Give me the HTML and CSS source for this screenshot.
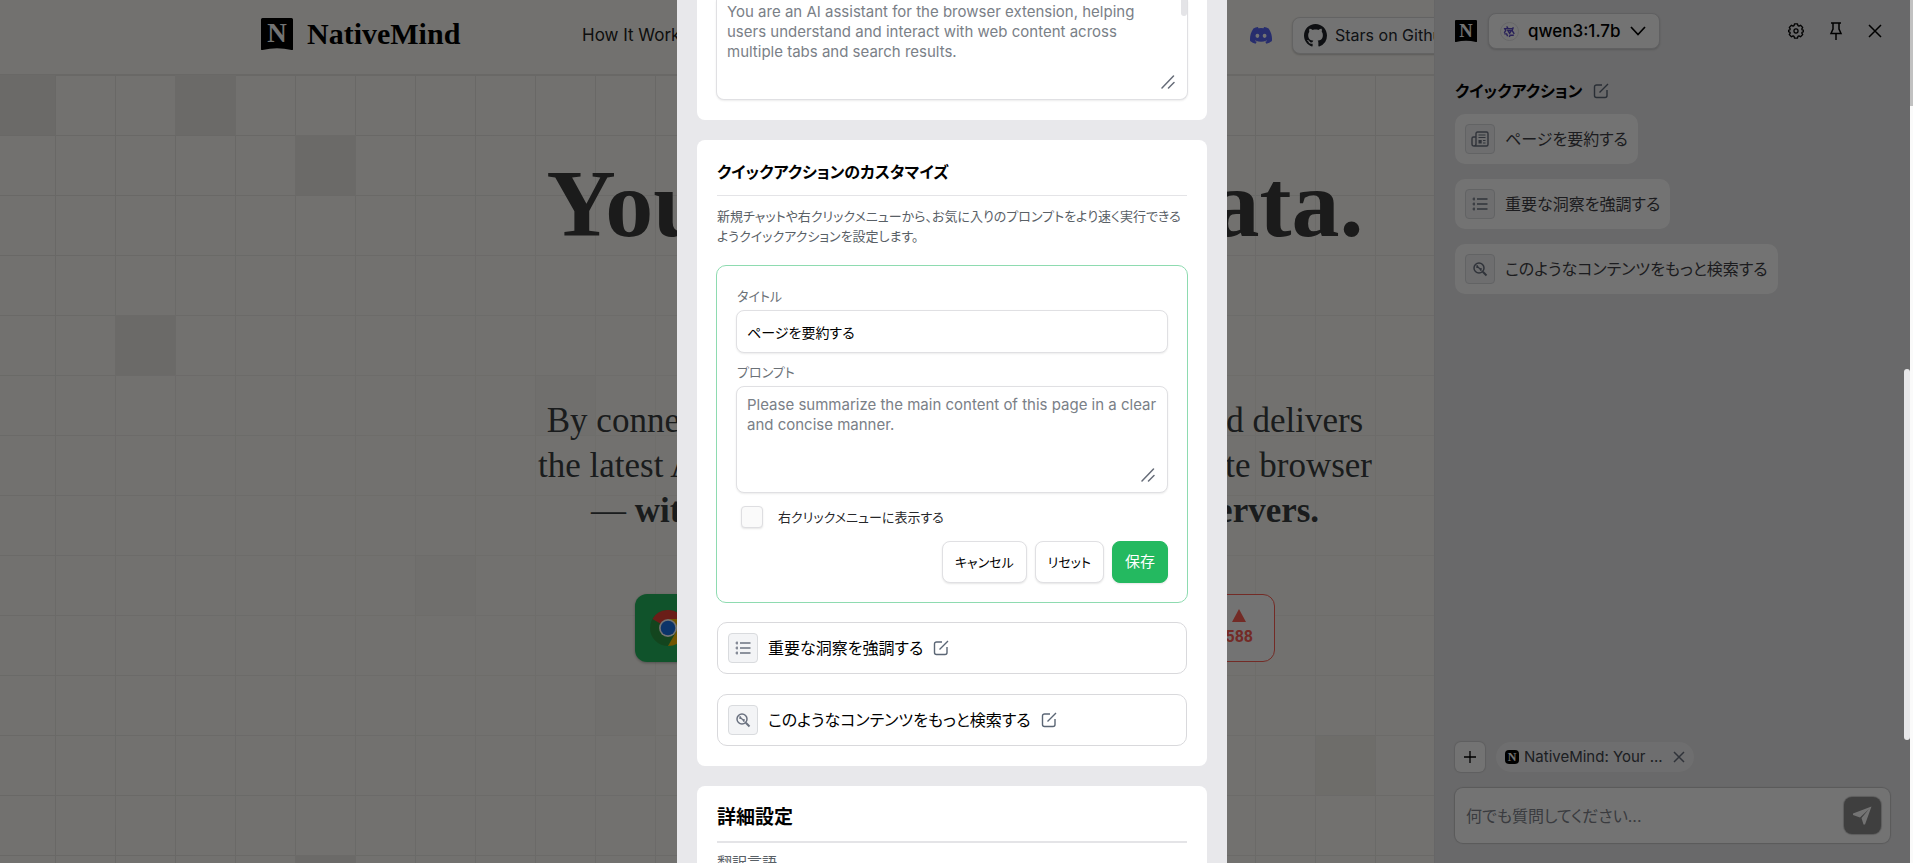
FILE: index.html
```
<!DOCTYPE html>
<html lang="ja">
<head>
  <meta charset="UTF-8">
  <meta name="viewport" content="width=device-width, initial-scale=1">
  <title>NativeMind</title>
  <link rel="stylesheet" href="styles.css">
</head>
<body>
  <!-- shared icons -->
  <svg class="sprite" aria-hidden="true">
    <symbol id="logo" viewBox="0 0 32 32">
      <path d="M1.500 0h29q1.500 0 1.500 1.500V31q0 1.500-1.500 1Q16 28.500 1.500 32 0 32.500 0 31V1.500Q0 0 1.500 0z"/>
      <text x="16" y="24" text-anchor="middle" font-family="Liberation Serif, serif" font-weight="bold" font-size="27" fill="#fff">N</text>
    </symbol>
    <symbol id="edit" viewBox="0 0 16 16">
      <path d="M9 2H3.500A2 2 0 0 0 1.500 4v8.500a2 2 0 0 0 2 2H12a2 2 0 0 0 2-2V7M6.500 9.500 15 1" fill="none" stroke="currentColor" stroke-width="1.400"/>
    </symbol>
    <symbol id="list" viewBox="0 0 16 16">
      <path d="M5 3h10.500M5 8h10.500M5 13h10.500" fill="none" stroke="currentColor" stroke-width="1.500"/>
      <path d="M.5 3h2.500M.5 8h2.500M.5 13h2.500M2 1.500v3M2 6.500v3M2 11.500v3" fill="none" stroke="currentColor" stroke-width="1.200"/>
    </symbol>
    <symbol id="search" viewBox="0 0 16 16">
      <circle cx="7" cy="7" r="5" fill="none" stroke="currentColor" stroke-width="1.500"/>
      <path d="M10.800 10.800 14.500 14.500" stroke="currentColor" stroke-width="2"/>
      <path d="M5.200 5.200l3.600 3.600M5 7V5h1M9 7v2H8" fill="none" stroke="currentColor" stroke-width="1.300"/>
    </symbol>
    <symbol id="news" viewBox="0 0 18 16">
      <path d="M5 13V2.500Q5 1 6.500 1h9Q17 1 17 2.500v11q0 1.500-1.500 1.500H3Q1 15 1 13V7.500Q1 6 2.500 6H5M5 13q0 2-2 2" fill="none" stroke="currentColor" stroke-width="1.400"/>
      <path d="M7.500 4h7M7.500 6.500h7M12 9.500h2.500M12 12h2.500" stroke="currentColor" stroke-width="1.100"/>
      <path d="M7.500 9h3.200v3.500H7.500z" fill="currentColor"/>
    </symbol>
    <symbol id="resize" viewBox="0 0 14 14">
      <path d="M1 13 12.500 1M7.500 13l5.500-5.500" stroke="currentColor" stroke-width="1.500" stroke-linecap="round"/>
    </symbol>
  </svg>

  <div class="app">
    <header class="site-header">
      <div class="header-inner">
        <a class="brand" href="#">
          <svg class="brand-logo" aria-hidden="true"><use href="#logo"/></svg>
          NativeMind
        </a>
        <nav class="site-nav">
          <a href="#">How It Works</a>
          <a href="#">Features</a>
          <a href="#">FAQ</a>
          <a href="#">Blog</a>
        </nav>
        <div class="header-actions">
          <a class="discord" href="#" aria-label="Discord">
            <svg width="22" height="17" viewBox="0 0 22 17" aria-hidden="true">
              <path d="M18.600 1.400A18 18 0 0 0 14.100 0l-.6 1.200a17 17 0 0 0-5 0L7.900 0a18 18 0 0 0-4.500 1.400C.5 5.600-.3 9.800.1 13.900A18 18 0 0 0 5.600 16.700l1.200-1.900-1.900-.9.500-.4a13 13 0 0 0 11.200 0l.5.4-1.900.9 1.200 1.900a18 18 0 0 0 5.500-2.800c.5-4.700-.8-8.900-3.300-12.500z" fill="#5865f2"/>
              <ellipse cx="7.400" cy="8.800" rx="1.900" ry="2.100" fill="#fff"/>
              <ellipse cx="14.600" cy="8.800" rx="1.900" ry="2.100" fill="#fff"/>
            </svg>
          </a>
          <a class="github" href="#">
            <svg width="23" height="23" viewBox="0 0 16 16" aria-hidden="true">
              <path fill="#1f2328" d="M8 0C3.580 0 0 3.580 0 8c0 3.540 2.290 6.530 5.470 7.590.4.070.55-.17.55-.38 0-.19-.01-.82-.01-1.490-2.010.37-2.530-.49-2.690-.94-.09-.23-.48-.94-.82-1.130-.28-.15-.68-.52-.01-.53.63-.01 1.080.58 1.230.82.72 1.210 1.870.87 2.330.66.070-.52.28-.87.51-1.070-1.780-.2-3.640-.89-3.640-3.950 0-.87.31-1.590.82-2.150-.08-.2-.36-1.020.08-2.120 0 0 .67-.21 2.200.82.64-.18 1.320-.27 2-.27s1.360.09 2 .27c1.530-1.040 2.200-.82 2.200-.82.44 1.100.16 1.920.08 2.120.51.56.82 1.270.82 2.150 0 3.070-1.870 3.750-3.650 3.950.29.25.54.73.54 1.480 0 1.070-.01 1.930-.01 2.200 0 .21.15.46.55.38A8.010 8.010 0 0 0 16 8c0-4.420-3.580-8-8-8z"/>
            </svg>
            Stars on Github
          </a>
        </div>
      </div>
    </header>

    <main class="hero">
      <svg class="hero-grid" aria-hidden="true">
        <defs>
          <pattern id="cells" width="60" height="60" x="-5" y="0" patternUnits="userSpaceOnUse">
            <path d="M.5 0v60M0 .5h60" stroke="#e9e7e3" fill="none"/>
          </pattern>
          <radialGradient id="fade" cx="45%" cy="58%" r="55%">
            <stop offset="0" stop-color="#fff" stop-opacity=".3"/>
            <stop offset=".5" stop-color="#fff" stop-opacity=".5"/>
            <stop offset="1" stop-color="#fff"/>
          </radialGradient>
          <mask id="fadeMask"><rect width="100%" height="100%" fill="url(#fade)"/></mask>
        </defs>
        <rect width="100%" height="100%" fill="url(#cells)" mask="url(#fadeMask)"/>
        <g fill="#edebe6">
          <path d="M0 0h55v60H0zM175 0h61v60h-61zM295 60h61v60h-61zM115 240h61v60h-61zM295 780h61v60h-61z"/>
          <path d="M1315 660h60v60h-60z" opacity=".6"/>
          <path d="M535 300h60v60h-60zM415 480h60v60h-60zM595 600h60v60h-60z" opacity=".2"/>
        </g>
      </svg>
      <h1>Your AI. Your Data.<br>Zero Cloud.</h1>
      <p class="lead">
        By connecting to Ollama local LLM, NativeMind delivers<br>
        the latest AI capabilities right inside your favourite browser<br>
        — <b>without sending a single byte to cloud servers.</b>
      </p>
      <div class="cta">
        <a class="cta-chrome" href="#">
          <svg width="36" height="36" viewBox="0 0 36 36" aria-hidden="true">
            <circle cx="18" cy="18" r="18" fill="#2a9a44"/>
            <path d="M18 18 2.400 9A18 18 0 0 1 33.600 9z" fill="#ea4335"/>
            <path d="M18 9h15.600A18 18 0 0 1 18 36l8-14z" fill="#fbbc04"/>
            <circle cx="18" cy="18" r="9" fill="#fff"/>
            <circle cx="18" cy="18" r="7.300" fill="#1a73e8"/>
          </svg>
          Add to Chrome for Free
        </a>
        <a class="cta-hunt" href="#">
          <span>Featured on Product Hunt</span>
          <span class="votes">
            <svg width="14" height="13" viewBox="0 0 14 13" aria-hidden="true"><path d="M7 0l7 13H0z" fill="currentColor"/></svg>
            588
          </span>
        </a>
      </div>
    </main>

    <aside class="sidebar">
      <div class="side-top">
        <svg class="side-logo" aria-hidden="true"><use href="#logo"/></svg>
        <div class="model">
          <svg width="19" height="19" viewBox="0 0 20 20" aria-hidden="true">
            <circle cx="10" cy="10" r="9.500" fill="#fff" stroke="#e4e4e7"/>
            <path d="M7 4.500l1.500 2.500h5M14 5.500 12.800 9l2.200 3.500M14.500 14h-3.500l-1.500 1.500M8 15 7 12.500H4.500M4.500 11.500 6 9 5 7h3M8.300 9h3.600l-1.800 3z" fill="none" stroke="#5b4bc4" stroke-width="1.500"/>
          </svg>
          <select aria-label="モデル"><option>qwen3:1.7b</option></select>
          <svg width="16" height="10" viewBox="0 0 16 10" aria-hidden="true"><path d="M1 1l7 7.500L15 1" fill="none" stroke="#000" stroke-width="1.700"/></svg>
        </div>
        <div class="side-tools">
          <button aria-label="設定">
            <svg width="16" height="16" viewBox="0 0 18 18" aria-hidden="true">
              <path d="M7.300 1h3.400l.5 2 1.100.5 1.800-1 2.400 2.400-1 1.800.5 1.100 2 .5v1.400l-2 .5-.5 1.100 1 1.800-2.400 2.400-1.800-1-1.100.5-.5 2H7.300l-.5-2-1.100-.5-1.800 1-2.400-2.400 1-1.800-.5-1.100-1.500-.5V8.300L2 7.800l.5-1.100-1-1.800 2.400-2.400 1.800 1L6.800 3z" fill="none" stroke="#000" stroke-width="1.500" stroke-linejoin="round"/>
              <circle cx="9" cy="9" r="2.300" fill="none" stroke="#000" stroke-width="1.400"/>
            </svg>
          </button>
          <button aria-label="固定">
            <svg width="14" height="18" viewBox="0 0 14 18" aria-hidden="true">
              <path d="M2 1h10M4 1v6l-2 4.500h10L10 7V1M7 11.500V18" fill="none" stroke="#000" stroke-width="1.500"/>
            </svg>
          </button>
          <button aria-label="閉じる">
            <svg width="14" height="14" viewBox="0 0 14 14" aria-hidden="true"><path d="M1 1l12 12M13 1 1 13" stroke="#000" stroke-width="1.500"/></svg>
          </button>
        </div>
      </div>
      <h2 class="side-title">クイックアクション <svg class="icon-edit" aria-hidden="true"><use href="#edit"/></svg></h2>
      <div class="quick-list">
        <button class="quick"><span class="tile"><svg class="icon-news" aria-hidden="true"><use href="#news"/></svg></span>ページを要約する</button>
        <button class="quick"><span class="tile"><svg class="icon-tile" aria-hidden="true"><use href="#list"/></svg></span>重要な洞察を強調する</button>
        <button class="quick"><span class="tile"><svg class="icon-tile" aria-hidden="true"><use href="#search"/></svg></span>このようなコンテンツをもっと検索する</button>
      </div>
      <div class="side-bottom">
        <div class="tabs">
          <button class="add-tab" aria-label="タブを追加">
            <svg width="12" height="12" viewBox="0 0 12 12" aria-hidden="true"><path d="M6 0v12M0 6h12" stroke="#000" stroke-width="1.300"/></svg>
          </button>
          <div class="chip">
            <svg width="14" height="14" viewBox="0 0 14 14" aria-hidden="true">
              <rect width="14" height="14" rx="4"/>
              <text x="7" y="11" text-anchor="middle" font-family="Liberation Serif, serif" font-weight="bold" font-size="12" fill="#fff">N</text>
            </svg>
            NativeMind: Your ...
            <button aria-label="タブを外す">
              <svg width="12" height="12" viewBox="0 0 12 12" aria-hidden="true"><path d="M1 1l10 10M11 1 1 11" stroke="#6b7280" stroke-width="1.500"/></svg>
            </button>
          </div>
        </div>
        <div class="ask">
          <input type="text" aria-label="質問" placeholder="何でも質問してください...">
          <button class="send" aria-label="送信">
            <svg width="19" height="19" viewBox="0 0 19 19" aria-hidden="true"><path d="M18.500.5 0 7.500v1.500l7 2.500L16 3 8.500 12l2 6.500h1.500z" fill="#fff"/></svg>
          </button>
        </div>
      </div>
    </aside>

    <div class="overlay">
      <div class="modal" role="dialog" aria-label="設定">
        <section class="card card-first">
          <div class="area area-system">
            <textarea aria-label="システムプロンプト">You are an AI assistant for the browser extension, helping users understand and interact with web content across multiple tabs and search results.</textarea>
            <span class="area-thumb"></span>
            <svg class="grip" aria-hidden="true"><use href="#resize"/></svg>
          </div>
        </section>

        <section class="card">
          <h2>クイックアクションのカスタマイズ</h2>
          <p class="desc">新規チャットや右クリックメニューから、お気に入りのプロンプトをより速く実行できるようクイックアクションを設定します。</p>

          <form class="editor">
            <label for="title">タイトル</label>
            <input class="text-input" type="text" id="title" value="ページを要約する">
            <label for="prompt">プロンプト</label>
            <div class="area">
              <textarea id="prompt">Please summarize the main content of this page in a clear and concise manner.</textarea>
              <svg class="grip" aria-hidden="true"><use href="#resize"/></svg>
            </div>
            <div class="check">
              <input type="checkbox" id="menu">
              <label for="menu">右クリックメニューに表示する</label>
            </div>
            <div class="buttons">
              <button type="button">キャンセル</button>
              <button type="button">リセット</button>
              <button type="button" class="save">保存</button>
            </div>
          </form>

          <div class="rows">
            <div class="row">
              <span class="tile"><svg class="icon-tile" aria-hidden="true"><use href="#list"/></svg></span>
              重要な洞察を強調する
              <button aria-label="編集"><svg class="icon-edit" aria-hidden="true"><use href="#edit"/></svg></button>
            </div>
            <div class="row">
              <span class="tile"><svg class="icon-tile" aria-hidden="true"><use href="#search"/></svg></span>
              このようなコンテンツをもっと検索する
              <button aria-label="編集"><svg class="icon-edit" aria-hidden="true"><use href="#edit"/></svg></button>
            </div>
          </div>
        </section>

        <section class="card card-last">
          <h2>詳細設定</h2>
          <p class="field-name">翻訳言語</p>
        </section>
      </div>
      <div class="overlay-track"><div class="overlay-thumb"></div></div>
    </div>
  </div>
  <div class="page-track"><div class="page-thumb"></div></div>
</body>
</html>
```
FILE: styles.css
```
* {
  box-sizing: border-box;
}

body {
  margin: 0;
  display: flex;
  height: 100vh;
  overflow: hidden;
  font-family: Inter, "Noto Sans CJK JP", sans-serif;
  font-size: 15px;
  line-height: 20px;
  color: #000;
}

h1, h2, p {
  margin: 0;
}

a {
  color: inherit;
  text-decoration: none;
}

button, input, textarea, select {
  font: inherit;
  color: inherit;
  margin: 0;
}

button {
  padding: 0;
  border: 0;
  background: none;
  cursor: pointer;
}

svg {
  flex: none;
  display: block;
}

.sprite {
  position: absolute;
  width: 0;
  height: 0;
}

.app {
  position: relative;
  flex: 1;
  min-width: 0;
  overflow: hidden;
  background: #fdfbf5;
}

/* site */
.site-header {
  border-bottom: 1px solid #e9e7e3;
}

.header-inner {
  display: flex;
  align-items: center;
  max-width: 1388px;
  height: 74px;
  margin: 0 auto;
  padding-bottom: 4px;
}

.brand {
  display: flex;
  align-items: center;
  gap: 14px;
  width: 321px;
  padding-bottom: 3px;
  font-family: "Liberation Serif", serif;
  font-size: 30px;
  font-weight: bold;
}

.brand-logo {
  width: 32px;
  height: 32px;
}

.site-nav {
  display: flex;
  flex: 1;
  gap: 40px;
  font-size: 17px;
  color: #222;
}

.header-actions {
  display: flex;
  align-items: center;
  gap: 20px;
  width: 399px;
}

.github {
  display: flex;
  align-items: center;
  gap: 8px;
  height: 37px;
  padding: 0 11px;
  border: 1px solid #dcdcdc;
  border-radius: 8px;
  background: #fff;
  box-shadow: 0 1px 2px rgba(0, 0, 0, 0.2);
  font-size: 16px;
  color: #24292f;
}

.hero {
  position: relative;
  height: calc(100vh - 75px);
  padding-top: 81px;
  text-align: center;
  font-family: "Liberation Serif", serif;
}

.hero-grid {
  position: absolute;
  inset: 0;
  width: 100%;
  height: 100%;
}

.hero h1 {
  position: relative;
  font-size: 96px;
  line-height: 96px;
  color: #3c3c3c;
}

.lead {
  position: relative;
  margin-top: 50px;
  font-size: 35px;
  line-height: 45px;
  color: #3a3f42;
}

.cta {
  position: relative;
  display: flex;
  justify-content: space-between;
  width: 640px;
  margin: 61px auto 0;
  font-family: Inter, sans-serif;
  font-size: 18px;
}

.cta a {
  display: flex;
  align-items: center;
  height: 68px;
  padding: 0 15px;
  border-radius: 12px;
}

.cta-chrome {
  gap: 14px;
  background: #24b960;
  color: #fff;
  box-shadow: 0 1px 3px rgba(0, 0, 0, 0.3);
}

.cta-hunt {
  gap: 30px;
  border: 1px solid #ff6154;
  background: #fff;
  color: #ff6154;
}

.votes {
  display: flex;
  flex-direction: column;
  align-items: center;
  gap: 5px;
  padding-right: 6px;
  font-family: Roboto, sans-serif;
  font-size: 16px;
  font-weight: bold;
}

/* side panel */
.sidebar {
  position: absolute;
  top: 0;
  right: 0;
  bottom: 0;
  display: flex;
  flex-direction: column;
  width: 476px;
  padding: 13px 20px 20px;
  border-left: 1px solid #e2e2e4;
  background: #e8e8ea;
}

.side-top {
  display: flex;
  align-items: center;
  gap: 11px;
  height: 36px;
}

.side-logo {
  width: 22px;
  height: 22px;
}

.model {
  display: flex;
  align-items: center;
  gap: 9px;
  height: 36px;
  padding: 0 13px 0 11px;
  border: 1px solid #d4d4d8;
  border-radius: 8px;
  background: #fff;
  box-shadow: 0 1px 2px rgba(0, 0, 0, 0.15);
}

.model select {
  appearance: none;
  padding: 0;
  border: 0;
  background: none;
  font-size: 17px;
  font-weight: 500;
}

.side-tools {
  display: flex;
  align-items: center;
  gap: 25px;
  margin-left: auto;
  padding-right: 8px;
}

.side-title {
  display: flex;
  align-items: center;
  gap: 11px;
  margin-top: 30px;
  font-size: 16px;
  line-height: 24px;
  font-feature-settings: "palt";
}

.icon-edit {
  width: 16px;
  height: 16px;
  color: #5b6675;
}

.quick-list {
  display: flex;
  flex-direction: column;
  align-items: flex-start;
  gap: 15px;
  margin-top: 11px;
}

.quick {
  display: flex;
  align-items: center;
  gap: 10px;
  height: 50px;
  padding: 0 10px;
  border-radius: 10px;
  background: #fff;
  font-size: 16px;
  font-feature-settings: "palt";
  color: #3f3f46;
}

.tile {
  display: flex;
  flex: none;
  align-items: center;
  justify-content: center;
  width: 30px;
  height: 30px;
  border: 1px solid #d9dbde;
  border-radius: 4px;
  background: #f3f4f6;
  color: #6b7280;
}

.icon-tile {
  width: 16px;
  height: 16px;
}

.icon-news {
  width: 18px;
  height: 16px;
}

.side-bottom {
  display: flex;
  flex-direction: column;
  gap: 16px;
  margin-top: auto;
}

.tabs {
  display: flex;
  gap: 11px;
}

.add-tab {
  display: flex;
  align-items: center;
  justify-content: center;
  width: 30px;
  height: 30px;
  border-radius: 6px;
  background: #fff;
  box-shadow: 0 0 1px 1px rgba(0, 0, 0, 0.1);
}

.chip {
  display: flex;
  align-items: center;
  gap: 5px;
  height: 30px;
  padding: 0 9px;
  border-radius: 15px;
  background: #f4f4f5;
  color: #3f444b;
}

.chip button {
  margin-left: 5px;
}

.ask {
  display: flex;
  align-items: center;
  height: 55px;
  padding: 0 9px 0 11px;
  border-radius: 8px;
  background: #fff;
  box-shadow: 0 0 1px 1px rgba(0, 0, 0, 0.15);
}

.ask input {
  flex: 1;
  min-width: 0;
  padding: 0;
  border: 0;
  background: none;
  font-size: 16px;
  font-feature-settings: "palt";
}

.ask input::placeholder {
  color: #80848c;
}

.send {
  display: flex;
  align-items: center;
  justify-content: center;
  width: 37px;
  height: 37px;
  border-radius: 8px;
  background: #8c8c8c;
  box-shadow: 0 0 1px 1px rgba(0, 0, 0, 0.2);
}

/* settings modal */
.overlay {
  position: absolute;
  inset: 0;
  display: flex;
  background: rgba(0, 0, 0, 0.55);
}

.modal {
  display: flex;
  flex-direction: column;
  gap: 20px;
  width: 550px;
  height: 100vh;
  margin: 0 auto;
  padding: 0 20px;
  overflow: hidden;
  background: #e8e8eb;
}

.card {
  flex: none;
  padding: 20px;
  border-radius: 8px;
  background: #fff;
}

.card-first {
  padding-top: 0;
  border-radius: 0 0 8px 8px;
}

.card h2 {
  padding-bottom: 11px;
  border-bottom: 1px solid #e4e4e7;
  font-size: 16px;
  line-height: 24px;
  font-feature-settings: "palt";
}

.card-last {
  flex: 1 0 auto;
  border-radius: 8px 8px 0 0;
}

.card-last h2 {
  border-bottom-width: 2px;
  font-size: 19px;
}

.desc, .field-name {
  margin-top: 10px;
  font-feature-settings: "palt";
  color: #596066;
}

.desc {
  font-size: 13px;
}

.area {
  position: relative;
}

.area textarea, .text-input {
  display: block;
  width: 100%;
  padding: 8px 10px;
  border: 1px solid #e0e0e3;
  border-radius: 8px;
  background: #fff;
  box-shadow: 0 1px 2px rgba(0, 0, 0, 0.08);
  outline: 0;
}

.area textarea {
  height: 107px;
  overflow: hidden;
  resize: none;
  color: #7a8087;
}

.area-system {
  margin: 0 -1px;
}

.area .area-thumb {
  position: absolute;
  top: 0;
  right: 1px;
  width: 6px;
  height: 16px;
  border-radius: 0 0 3px 3px;
  background: #e4e4e7;
}

.area-system textarea {
  height: 100px;
  padding-top: 2px;
  border-top: 0;
  border-radius: 0 0 8px 8px;
}

.grip {
  position: absolute;
  right: 13px;
  bottom: 11px;
  width: 14px;
  height: 14px;
  color: #666c78;
}

.editor {
  display: flex;
  flex-direction: column;
  margin: 19px -1px;
  padding: 20px 19px 19px;
  border: 1px solid #8edbb0;
  border-radius: 10px;
  font-size: 13px;
  font-feature-settings: "palt";
}

.editor > label {
  margin-bottom: 4px;
  padding-left: 1px;
  color: #6b7177;
}

.editor textarea {
  font-size: 15px;
}

.text-input {
  height: 43px;
  margin-bottom: 9px;
  font-size: 14px;
}

.check {
  display: flex;
  align-items: center;
  gap: 15px;
  margin: 13px 0 13px 5px;
  color: #27272a;
}

.check input {
  appearance: none;
  width: 22px;
  height: 22px;
  border: 1px solid #dedee1;
  border-radius: 4px;
  background: #fafafa;
  box-shadow: 0 1px 2px rgba(0, 0, 0, 0.1);
}

.buttons {
  display: flex;
  justify-content: flex-end;
  gap: 8px;
}

.buttons button {
  height: 42px;
  padding: 0 12px;
  border: 1px solid #e0e0e3;
  border-radius: 8px;
  background: #fff;
  box-shadow: 0 1px 2px rgba(0, 0, 0, 0.1);
}

.buttons .save {
  border-color: #24b960;
  background: #24b960;
  font-size: 15px;
  color: #fff;
}

.rows {
  display: flex;
  flex-direction: column;
  gap: 20px;
}

.row {
  display: flex;
  align-items: center;
  gap: 10px;
  height: 52px;
  padding: 0 10px;
  border: 1px solid #d9d9dc;
  border-radius: 10px;
  font-size: 16px;
  font-feature-settings: "palt";
}

/* scrollbars */
.overlay-track {
  width: 6px;
  padding-top: 369px;
}

.overlay-thumb {
  height: 371px;
  border-radius: 3px;
  background: #e8e8ea;
}

.page-track {
  width: 3px;
  background: #fafafa;
}

.page-thumb {
  height: 106px;
  background: #c1c1c1;
}
```
